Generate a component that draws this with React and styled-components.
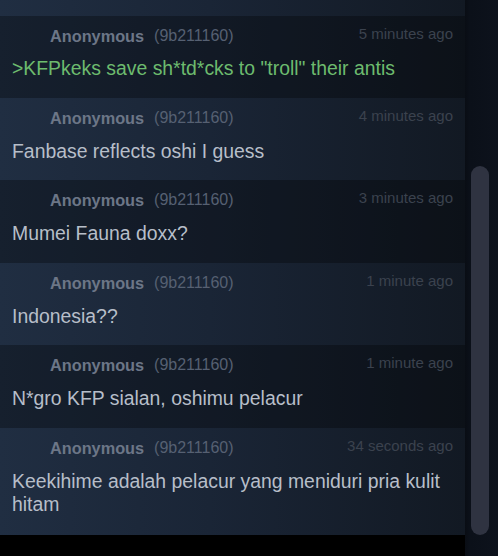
import React from "react";
import styled, { createGlobalStyle } from "styled-components";

const GlobalStyle = createGlobalStyle`
  html, body {
    margin: 0;
    padding: 0;
    background: #000000;
  }
  body {
    font-family: "Liberation Sans", Arial, sans-serif;
  }
`;

const Page = styled.div`
  display: flex;
  width: 498px;
  height: 556px;
  overflow: hidden;
  background: #000000;
`;

const Feed = styled.div`
  flex: 0 0 465px;
  height: 535px;
  overflow: hidden;
`;

const List = styled.div`
  display: flex;
  flex-direction: column;
  background: linear-gradient(to right, #202e42 0%, #1a2536 45%, #121923 100%);
`;

/* tail of the previous, scrolled-away message */
const TopEdge = styled.div`
  height: 15.5px;
`;

const Row = styled.div`
  display: flex;
  flex-direction: column;
  padding: 10px 12px 17.9px;

  &:nth-child(even) {
    background: rgba(0, 0, 0, 0.3);
  }
  &:last-child {
    padding-bottom: 19.9px;
  }
`;

const Header = styled.div`
  display: flex;
  align-items: flex-start;
  height: 20px;
  padding-left: 38px;
`;

const Name = styled.span`
  font-size: 16.3px;
  line-height: 20px;
  font-weight: bold;
  color: #6c7687;
`;

const UserId = styled.span`
  margin-left: 10px;
  font-size: 16px;
  line-height: 20px;
  color: #566072;
`;

const Time = styled.span`
  margin-left: auto;
  font-size: 15px;
  line-height: 16px;
  color: #3b424e;
`;

const Message = styled.div`
  margin-top: 11.6px;
  font-size: 19.4px;
  line-height: 23px;
  color: ${(p) => (p.$green ? "#6dbb6e" : "#b7bec9")};
`;

const Track = styled.div`
  flex: 0 0 33px;
  height: 556px;
  padding: 166px 0 0 6px;
  box-sizing: border-box;
  background: linear-gradient(to right, #090d14 0px, #0b1019 5px, #0d121c 100%);
`;

const Thumb = styled.div`
  width: 18px;
  height: 369px;
  border-radius: 9px;
  background: #2f3341;
`;

const messages = [
  { time: "5 minutes ago", text: '>KFPkeks save sh*td*cks to "troll" their antis', green: true },
  { time: "4 minutes ago", text: "Fanbase reflects oshi I guess" },
  { time: "3 minutes ago", text: "Mumei Fauna doxx?" },
  { time: "1 minute ago", text: "Indonesia??" },
  { time: "1 minute ago", text: "N*gro KFP sialan, oshimu pelacur" },
  { time: "34 seconds ago", text: "Keekihime adalah pelacur yang meniduri pria kulit hitam" },
];

export default function App() {
  return (
    <Page>
      <GlobalStyle />
      <Feed>
        <List>
          <TopEdge />
          {messages.map((m, i) => (
            <Row key={i}>
              <Header>
                <Name>Anonymous</Name>
                <UserId>(9b211160)</UserId>
                <Time>{m.time}</Time>
              </Header>
              <Message $green={m.green}>{m.text}</Message>
            </Row>
          ))}
        </List>
      </Feed>
      <Track>
        <Thumb />
      </Track>
    </Page>
  );
}
